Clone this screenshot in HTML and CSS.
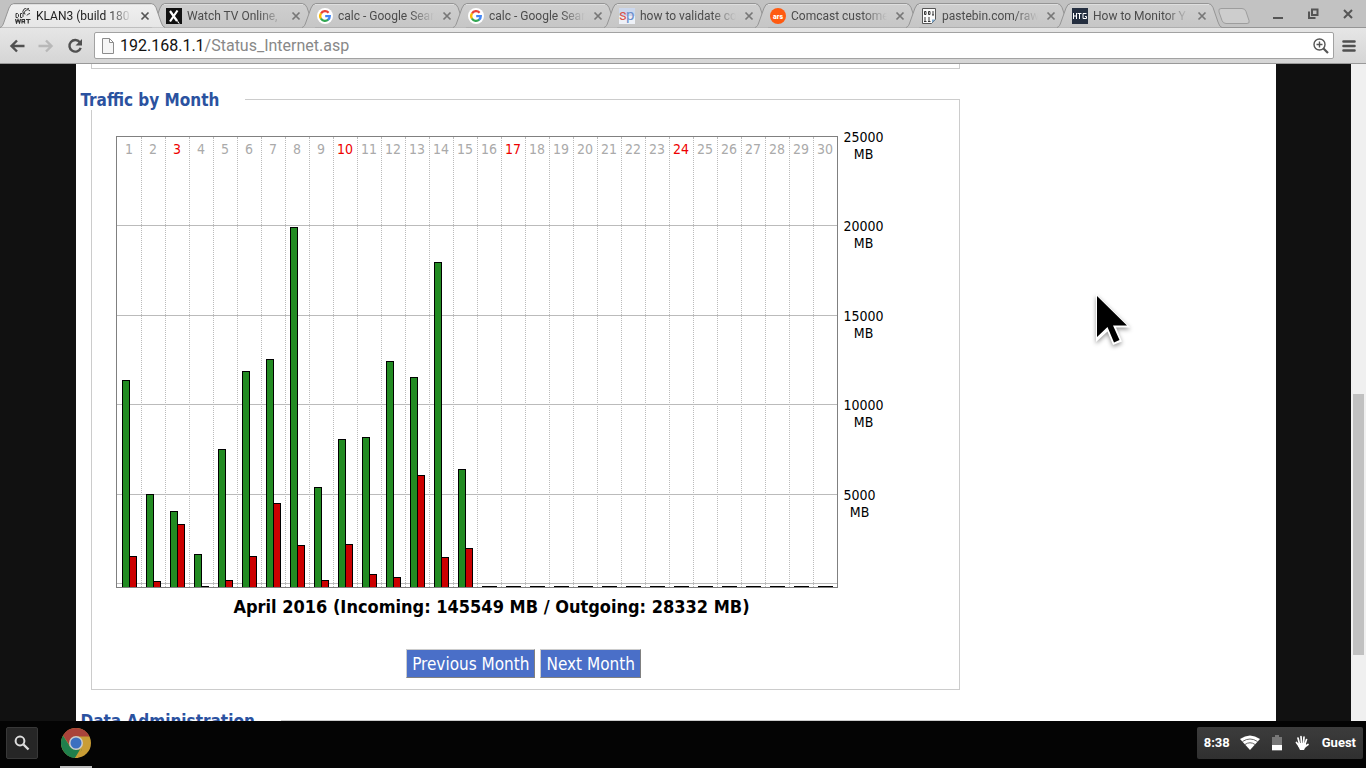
FILE: index.html
```
<!DOCTYPE html>
<html lang="en">
<head>
<meta charset="utf-8">
<title>KLAN3 (build 180) - Internet Status</title>
<link rel="stylesheet" href="styles.css">
</head>
<body>
<svg class="defs" aria-hidden="true">
  <defs>
    <linearGradient id="tabfill" x1="0" y1="0" x2="0" y2="1"><stop offset="0" stop-color="#cfcfcf"/><stop offset="1" stop-color="#c6c6c6"/></linearGradient>
    <linearGradient id="activefill" x1="0" y1="0" x2="0" y2="1"><stop offset="0" stop-color="#f0f0f0"/><stop offset="1" stop-color="#e6e6e6"/></linearGradient>
    <symbol id="shape" viewBox="0 0 166 28"><path d="M0 27.500C2 27 3 25 4 22L9 8Q10.500 3.500 14 3.500H151Q154.500 3.500 156 7.500L161 22Q162.500 27 165 27.500" stroke="#959595"/><path d="M13 4.500H152" stroke="#dedede"/></symbol>
    <symbol id="x" viewBox="0 0 10 10"><path d="M1.500 1.500l7 7M8.500 1.500l-7 7" stroke="currentColor" stroke-width="1.700"/></symbol>
    <symbol id="google" viewBox="0 0 16 16"><circle cx="8" cy="8" r="8" fill="#fff"/><g fill="none" stroke-width="2.300"><path d="M4 5.500A4.800 4.800 0 0 1 11.600 4.700" stroke="#ea4335"/><path d="M4 5.300A4.800 4.800 0 0 0 4 10.700" stroke="#fbbc05"/><path d="M3.900 10.500A4.800 4.800 0 0 0 11.300 11.500" stroke="#34a853"/><path d="M11 11.800A4.600 4.600 0 0 0 12.800 8.100H8.200" stroke="#4285f4"/></g></symbol>
  </defs>
</svg>
<header class="browser">
  <div class="tabbar">
    <div class="tabs" role="tablist">
      <div class="tab active" role="tab" aria-selected="true"><svg class="shape"><use href="#shape"/></svg>
        <svg class="fav" viewBox="0 0 16 16"><g fill="none" stroke="#333"><path d="M8.500 6A4 4 0 0 1 14 .5M10 6.500A3 3 0 0 1 15 3M12 7.500Q13 5.500 15 5.500"/><path d="M1 5.500v4h1.500l1-1v-2l-1-1zM5.500 5.500v4H7l1-1v-2l-1-1z"/><path d="M.5 11l1 4 1.500-3.500L4.500 15l1-4M7 15.500v-4h2.500v2H7M8.500 13.500l1.500 2M11 11.500h4.500M13.200 11.500v4" stroke-width="1.200"/></g></svg>
        <span class="label">KLAN3 (build 180</span><button class="close" aria-label="Close tab"><svg><use href="#x"/></svg></button></div>
      <div class="tab" role="tab"><svg class="shape"><use href="#shape"/></svg>
        <svg class="fav" viewBox="0 0 16 16"><path fill="#111" d="M0 0h16v16H0z"/><path d="M4 3l7 10M11.500 2.500L4 13.500" stroke="#fff" stroke-width="2.200"/><path d="M10 10l4 6-2-1z" fill="#fff"/></svg>
        <span class="label">Watch TV Online,</span><button class="close" aria-label="Close tab"><svg><use href="#x"/></svg></button></div>
      <div class="tab" role="tab"><svg class="shape"><use href="#shape"/></svg>
        <svg class="fav"><use href="#google"/></svg>
        <span class="label">calc - Google Sear</span><button class="close" aria-label="Close tab"><svg><use href="#x"/></svg></button></div>
      <div class="tab" role="tab"><svg class="shape"><use href="#shape"/></svg>
        <svg class="fav"><use href="#google"/></svg>
        <span class="label">calc - Google Sear</span><button class="close" aria-label="Close tab"><svg><use href="#x"/></svg></button></div>
      <div class="tab" role="tab"><svg class="shape"><use href="#shape"/></svg>
        <svg class="fav" viewBox="0 0 16 16"><path fill="#cbd7ed" d="M0 0h16v8H0z"/><path fill="#eef1f7" d="M0 8h16v8H0z"/><text x="0" y="12" font-size="15" fill="#d9534a">s</text><text x="7" y="12" font-size="15" fill="#6c8ecb">p</text></svg>
        <span class="label">how to validate co</span><button class="close" aria-label="Close tab"><svg><use href="#x"/></svg></button></div>
      <div class="tab" role="tab"><svg class="shape"><use href="#shape"/></svg>
        <svg class="fav" viewBox="0 0 16 16"><circle cx="8" cy="8" r="8" fill="#ff5a10"/><text x="8" y="10.500" text-anchor="middle" font-size="7" font-weight="900" fill="#fff">ars</text></svg>
        <span class="label">Comcast custome</span><button class="close" aria-label="Close tab"><svg><use href="#x"/></svg></button></div>
      <div class="tab" role="tab"><svg class="shape"><use href="#shape"/></svg>
        <svg class="fav" viewBox="0 0 16 16"><path d="M1.500.5h13v11l-4 4h-9z" fill="#fafafa" stroke="#555"/><path d="M11 15v-3.500h3.500z" fill="#7da7cb"/><g fill="none" stroke="#222"><path d="M3.500 3.500h1.500v3H3.500zM7.500 3.500H9v3H7.500zM12 3v4M11 7h2M4 9v4.500M3 13.500h2.500M8 9v4.500M7 13.500h2.500" stroke-width=".9"/></g></svg>
        <span class="label">pastebin.com/raw</span><button class="close" aria-label="Close tab"><svg><use href="#x"/></svg></button></div>
      <div class="tab" role="tab"><svg class="shape"><use href="#shape"/></svg>
        <svg class="fav" viewBox="0 0 16 16"><path fill="#252f40" d="M0 0h16v16H0z"/><path d="M1.500 5v6M4.500 5v6M1.500 8h3M5.500 5.500h4M7.500 5.500V11M14.500 5.500h-3.500v5h3.500V8.500h-1.500" fill="none" stroke="#fff"/></svg>
        <span class="label">How to Monitor Y</span><button class="close" aria-label="Close tab"><svg><use href="#x"/></svg></button></div>
    </div>
    <button class="newtab" aria-label="New tab"><svg viewBox="0 0 32 16"><path d="M3 .5h21q3 0 4 3l3 9q1 3-2 3H8q-3 0-4-3L1 4Q0 .5 3 .5z" fill="#cdcdcd" stroke="#9d9d9d"/></svg></button>
    <div class="window-controls">
      <button aria-label="Minimize"><svg viewBox="0 0 12 12"><path d="M1 10h10" stroke="#555" stroke-width="2"/></svg></button>
      <button aria-label="Restore"><svg viewBox="0 0 12 12"><path d="M5 1.500h5.500V7H5zM2 3.500V10h6.500" fill="none" stroke="#555" stroke-width="2"/></svg></button>
      <button aria-label="Close"><svg viewBox="0 0 12 12"><path d="M2 2l8 8M10 2l-8 8" stroke="#555" stroke-width="2"/></svg></button>
    </div>
  </div>
  <div class="toolbar">
    <button class="nav" aria-label="Back"><svg viewBox="0 0 16 16"><path d="M15.500 8H3M8 2.500L2.500 8 8 13.500" fill="none" stroke="#505050" stroke-width="2.400"/></svg></button>
    <button class="nav" aria-label="Forward"><svg viewBox="0 0 16 16"><path d="M.5 8h12.500M8 2.500L13.500 8 8 13.500" fill="none" stroke="#b8b8b8" stroke-width="2.400"/></svg></button>
    <button class="nav" aria-label="Reload"><svg viewBox="0 0 16 16"><path d="M12.800 4.200A5.800 5.800 0 1 0 13.700 9.800" fill="none" stroke="#505050" stroke-width="2.400"/><path d="M15 1v6.500H8.500z" fill="#505050"/></svg></button>
    <div class="omnibox">
      <svg class="doc" viewBox="0 0 12 16"><path d="M.5.5h7l4 4v11H.5zM7.500.5v4h4" fill="#f6f6f6" stroke="#8c8c8c"/></svg>
      <a class="url" href="#status"><b>192.168.1.1</b>/Status_Internet.asp</a>
      <svg class="zoom" viewBox="0 0 16 16"><g fill="none" stroke="#555"><circle cx="6.500" cy="6.500" r="5.500" stroke-width="1.400"/><path d="M6.500 3.500v6M3.500 6.500h6" stroke-width="1.400"/><path d="M10.500 10.500L15 15" stroke-width="2.200"/></g></svg>
    </div>
    <button class="menu" aria-label="Menu"><svg viewBox="0 0 14 14"><path d="M1.500 2.500h11M1.500 7h11M1.500 11.500h11" stroke="#505050" stroke-width="2.600" stroke-linecap="round"/></svg></button>
  </div>
</header>
<div class="viewport">
  <main class="page" id="status">
    <div class="panel-end"></div>
    <fieldset>
      <legend>Traffic by Month</legend>
      <div class="chart">
        <div class="chart-row">
          <div class="plot">
            <div class="gridlines"><i></i><i></i><i></i><i></i><i></i></div>
            <div class="day"><span>1</span><i class="in" style="height:207px"></i><i class="out" style="height:31px"></i></div>
            <div class="day"><span>2</span><i class="in" style="height:93px"></i><i class="out" style="height:6px"></i></div>
            <div class="day sunday"><span>3</span><i class="in" style="height:76px"></i><i class="out" style="height:63px"></i></div>
            <div class="day"><span>4</span><i class="in" style="height:33px"></i><i class="out" style="height:1px"></i></div>
            <div class="day"><span>5</span><i class="in" style="height:138px"></i><i class="out" style="height:7px"></i></div>
            <div class="day"><span>6</span><i class="in" style="height:216px"></i><i class="out" style="height:31px"></i></div>
            <div class="day"><span>7</span><i class="in" style="height:228px"></i><i class="out" style="height:84px"></i></div>
            <div class="day"><span>8</span><i class="in" style="height:360px"></i><i class="out" style="height:42px"></i></div>
            <div class="day"><span>9</span><i class="in" style="height:100px"></i><i class="out" style="height:7px"></i></div>
            <div class="day sunday"><span>10</span><i class="in" style="height:148px"></i><i class="out" style="height:43px"></i></div>
            <div class="day"><span>11</span><i class="in" style="height:150px"></i><i class="out" style="height:13px"></i></div>
            <div class="day"><span>12</span><i class="in" style="height:226px"></i><i class="out" style="height:10px"></i></div>
            <div class="day"><span>13</span><i class="in" style="height:210px"></i><i class="out" style="height:112px"></i></div>
            <div class="day"><span>14</span><i class="in" style="height:325px"></i><i class="out" style="height:30px"></i></div>
            <div class="day"><span>15</span><i class="in" style="height:118px"></i><i class="out" style="height:39px"></i></div>
            <div class="day"><span>16</span><i class="in"></i><i class="out"></i></div>
            <div class="day sunday"><span>17</span><i class="in"></i><i class="out"></i></div>
            <div class="day"><span>18</span><i class="in"></i><i class="out"></i></div>
            <div class="day"><span>19</span><i class="in"></i><i class="out"></i></div>
            <div class="day"><span>20</span><i class="in"></i><i class="out"></i></div>
            <div class="day"><span>21</span><i class="in"></i><i class="out"></i></div>
            <div class="day"><span>22</span><i class="in"></i><i class="out"></i></div>
            <div class="day"><span>23</span><i class="in"></i><i class="out"></i></div>
            <div class="day sunday"><span>24</span><i class="in"></i><i class="out"></i></div>
            <div class="day"><span>25</span><i class="in"></i><i class="out"></i></div>
            <div class="day"><span>26</span><i class="in"></i><i class="out"></i></div>
            <div class="day"><span>27</span><i class="in"></i><i class="out"></i></div>
            <div class="day"><span>28</span><i class="in"></i><i class="out"></i></div>
            <div class="day"><span>29</span><i class="in"></i><i class="out"></i></div>
            <div class="day"><span>30</span><i class="in"></i><i class="out"></i></div>
          </div>
          <div class="scale"><span>25000<br>MB</span><span>20000<br>MB</span><span>15000<br>MB</span><span>10000<br>MB</span><span>5000<br>MB</span></div>
        </div>
        <p class="caption">April 2016 (Incoming: 145549 MB / Outgoing: 28332 MB)</p>
      </div>
      <div class="actions"><button>Previous Month</button><button>Next Month</button></div>
    </fieldset>
    <fieldset>
      <legend>Data Administration</legend>
    </fieldset>
  </main>
  <div class="scrollbar"><div class="thumb"></div></div>
  <svg class="cursor" viewBox="0 0 40 58"><path d="M4 4V52L15.500 41.500 21 55 30 51.500 24 37.500H38.500z" fill="#fff"/><path d="M5 6V47L15.500 37 22 52.500 27.500 50 21 35.500H35z" fill="#000"/></svg>
</div>
<footer class="shelf">
  <button class="launcher" aria-label="Search"><svg viewBox="0 0 16 16"><circle cx="6" cy="6" r="4.400" fill="none" stroke="#ddd" stroke-width="2"/><path d="M9.500 9.500L14.500 14.500" stroke="#ddd" stroke-width="2.400"/></svg></button>
  <button class="app" aria-label="Chrome"><svg viewBox="0 0 30 30"><circle cx="15" cy="15" r="15" fill="#c99d35"/><path d="M2 7.500A15 15 0 0 1 28.500 8.500H15L8.500 17z" fill="#a9433b"/><path d="M2 7.500L9 18.500 15 21.500H21L14 30A15 15 0 0 1 2 7.500z" fill="#207f4c"/><path d="M20.500 19L14 30h3L22 18z" fill="#c99d35"/><circle cx="15" cy="15" r="7" fill="#ccc"/><circle cx="15" cy="15" r="5.500" fill="#3c6fc0"/></svg></button>
  <button class="tray">
    <span>8:38</span>
    <svg class="wifi" viewBox="0 0 20 16"><path d="M0 4Q10-3 20 4L10 15z" fill="#fff"/><path d="M2.500 6.500Q10 1.500 17.500 6.500M5 9.500Q10 6 15 9.500" fill="none" stroke="#666"/></svg>
    <svg class="battery" viewBox="0 0 10 16"><path d="M3 0h4v2h3v14H0V2h3z" fill="#777"/><path d="M0 10h10v5H0z" fill="#fff"/></svg>
    <svg class="hand" viewBox="0 0 14 16"><g fill="none" stroke="#fff" stroke-linecap="round"><path d="M4.500 9L3 3M6.500 8L6 1.500M8.500 8L9 2M10 9L11.500 4.500M4 11L1.500 7.500M9.500 12L13 9.500" stroke-width="1.700"/></g><path d="M3.500 8h7.500v3l-2 4H5l-2-4z" fill="#fff"/></svg>
    <span>Guest</span>
  </button>
</footer>
</body>
</html>
```
FILE: styles.css
```
* { box-sizing: border-box; }
html, body { height: 100%; margin: 0; }
body {
  display: flex;
  flex-direction: column;
  overflow: hidden;
  background: #111;
  font-family: Roboto, sans-serif;
}
button { font: inherit; margin: 0; padding: 0; border: 0; background: none; color: inherit; }
svg { display: block; flex: none; }
.defs { position: absolute; width: 0; height: 0; }

/* Browser frame */
.tabbar { display: flex; height: 28px; background: #c2c2c2; box-shadow: inset 0 -1px #959595; }
.tabs { display: flex; min-width: 0; }
.tab {
  position: relative;
  display: flex;
  align-items: center;
  width: 151px;
  height: 28px;
  padding: 4px 0 0 15px;
  color: #4c4c4c;
  font-size: 12px;
}
.tab > * { position: relative; }
.tab .shape { position: absolute; left: 0; top: 0; width: 166px; height: 28px; fill: url(#tabfill); }
.tab.active { z-index: 1; color: #222; }
.tab.active .shape { fill: url(#activefill); }
.fav { width: 16px; height: 16px; }
.label {
  flex: 1;
  min-width: 0;
  margin-left: 5px;
  white-space: nowrap;
  mask-image: linear-gradient(to right, #000 75%, transparent);
}
.close { margin: 0 1px 0 8px; color: #777; }
.close svg { width: 10px; height: 10px; }
.active .close { color: #555; }
.newtab { align-self: center; margin: 4px 0 0 10px; }
.newtab svg { width: 32px; height: 16px; }
.window-controls { display: flex; align-items: center; gap: 23px; margin-left: auto; padding-right: 12px; }
.window-controls svg { width: 12px; height: 12px; }
.toolbar {
  display: flex;
  align-items: center;
  height: 36px;
  padding: 0 10px 0 9px;
  border-bottom: 1px solid #999;
  background: linear-gradient(#e6e6e6, #d5d5d5);
}
.nav { margin-right: 13px; }
.nav svg { width: 16px; height: 16px; }
.omnibox {
  display: flex;
  flex: 1;
  align-items: center;
  height: 27px;
  margin-left: -2px;
  padding: 0 4px 0 7px;
  border: 1px solid #a2a2a2;
  border-radius: 2px;
  background: #fff;
}
.doc { width: 12px; height: 16px; }
.url { flex: 1; margin-left: 6px; color: #888; font-size: 16px; text-decoration: none; }
.url b { color: #111; font-weight: 400; }
.zoom { width: 16px; height: 16px; }
.menu { margin-left: 8px; }
.menu svg { width: 14px; height: 14px; }

/* Router page */
.viewport {
  position: relative;
  display: flex;
  flex: 1;
  min-height: 0;
  overflow: hidden;
  font-family: "DejaVu Sans Condensed", "DejaVu Sans", sans-serif;
}
.page { flex: 0 1 1200px; margin: 0 auto; padding: 0 316px 0 15px; background: #fff; }
.panel-end { height: 5px; border: 1px solid #ccc; border-top: 0; }
fieldset { min-width: 0; margin: 20px 0 0; padding: 26px 24px 11px; border: 1px solid #ccc; }
legend {
  margin-left: -35px;
  padding: 1px 26px 0 0;
  background: #fff;
  color: #2b52a0;
  font-size: 17px;
  font-weight: 700;
  line-height: 20px;
}
.chart { width: 752px; }
.chart-row { display: flex; }
.plot {
  position: relative;
  display: grid;
  grid-template-columns: repeat(30, 24px);
  height: 452px;
  border: 1px solid #808080;
}
.gridlines { position: absolute; inset: 0 0 3px; display: grid; grid-template-rows: repeat(5, 1fr); }
.gridlines i { border-bottom: 1px solid #bbb; }
.day {
  position: relative;
  display: flex;
  align-items: flex-end;
  justify-content: center;
  border-left: 1px dotted #bbb;
  color: #aaa;
  font-size: 14px;
}
.gridlines + .day { border-left-color: transparent; }
.day.sunday { color: #e00; }
.day span { position: absolute; top: 4px; left: 0; right: 0; line-height: 17px; text-align: center; }
.in { width: 8px; height: 1px; border: 1px solid #000; border-bottom: 0; background: #228b22; }
.out { width: 7px; height: 1px; border: 1px solid #000; border-width: 1px 1px 0 0; background: #c00; }
.scale {
  display: grid;
  grid-template-rows: repeat(5, 1fr);
  justify-items: start;
  height: 447px;
  margin: -7px 0 0 6px;
  font-size: 14px;
  line-height: 17px;
  text-align: center;
}
.caption { margin: 8px 0 0; font-size: 18px; font-weight: 700; line-height: 22px; text-align: center; }
.actions { display: flex; justify-content: center; gap: 5px; margin-top: 31px; padding-right: 3px; }
.actions button {
  height: 29px;
  padding: 0 5px;
  border: 1px solid;
  border-color: #ccc #808080 #808080 #ccc;
  background: #4a6fc8;
  color: #fff;
  font-size: 17px;
}
.scrollbar { display: flex; flex-direction: column; width: 15px; padding: 330px 2px 0; background: #f0f0f0; }
.thumb { height: 261px; background: #c1c1c1; }
.cursor {
  position: absolute;
  left: 1092px;
  top: 226px;
  width: 40px;
  height: 58px;
  filter: drop-shadow(0 2px 2px #0006);
}

/* System shelf */
.shelf { display: flex; align-items: center; height: 47px; padding: 0 3px 0 6px; background: #040404; }
.launcher {
  display: grid;
  place-items: center;
  width: 32px;
  height: 32px;
  margin-bottom: 4px;
  border: 1px solid #383838;
  border-radius: 2px;
  background: #262626;
}
.launcher svg { width: 16px; height: 16px; }
.app { align-self: stretch; width: 32px; margin-left: 22px; padding: 0 1px 1px; border-bottom: 2px solid #bbb; }
.app svg { width: 30px; height: 30px; }
.tray {
  display: flex;
  align-items: center;
  height: 32px;
  margin: 0 0 4px auto;
  padding: 0 7px;
  border-radius: 2px;
  background: linear-gradient(#3c3c3c, #303030);
  color: #fff;
  font-size: 13px;
  font-weight: 700;
}
.wifi { width: 20px; height: 16px; margin-left: 10px; }
.battery { width: 10px; height: 16px; margin-left: 12px; }
.hand { width: 14px; height: 16px; margin: 0 13px; }
```
